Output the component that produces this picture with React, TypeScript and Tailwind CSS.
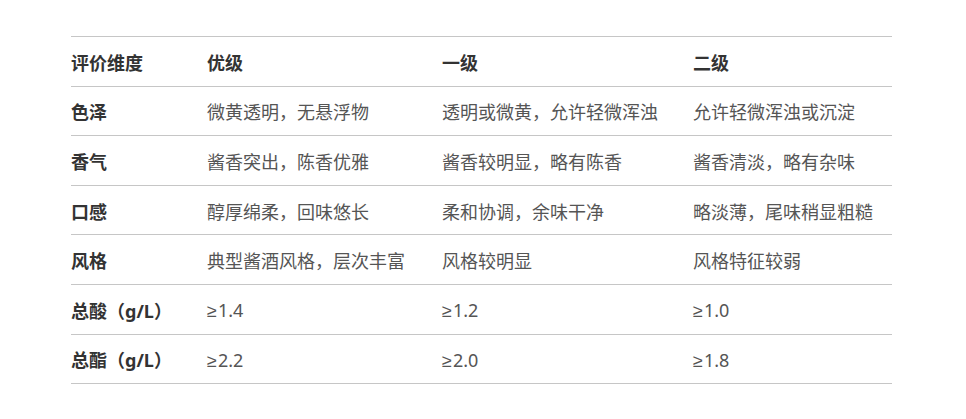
import React from "react";

const header = ["评价维度", "优级", "一级", "二级"];
const rows: string[][] = [
  ["色泽", "微黄透明，无悬浮物", "透明或微黄，允许轻微浑浊", "允许轻微浑浊或沉淀"],
  ["香气", "酱香突出，陈香优雅", "酱香较明显，略有陈香", "酱香清淡，略有杂味"],
  ["口感", "醇厚绵柔，回味悠长", "柔和协调，余味干净", "略淡薄，尾味稍显粗糙"],
  ["风格", "典型酱酒风格，层次丰富", "风格较明显", "风格特征较弱"],
  ["总酸（g/L）", "≥1.4", "≥1.2", "≥1.0"],
  ["总酯（g/L）", "≥2.2", "≥2.0", "≥1.8"],
];

function Cell({ text }: { text: string }) {
  if (text.startsWith("≥")) {
    return (
      <>
        <span style={{ fontFamily: '"Liberation Sans", sans-serif' }} className="mr-[1px]">
          ≥
        </span>
        {text.slice(1)}
      </>
    );
  }
  return <>{text}</>;
}

export default function App() {
  return (
    <div
      className="w-[966px] h-[419px] bg-white pt-[36px] pl-[71px]"
      style={{ fontFamily: '"Noto Sans", "Noto Sans CJK SC", sans-serif' }}
    >
      <div className="w-[821px] border-t border-[#c6c6c6]">
        <div className="grid grid-cols-[136px_235px_251px_199px] h-[49.6px] border-b border-[#c6c6c6] items-center">
          {header.map((h, i) => (
            <div key={i} className="text-[18px] font-bold text-[#333333] pt-[3px] leading-none">
              {h}
            </div>
          ))}
        </div>
        {rows.map((r, ri) => (
          <div
            key={ri}
            className="grid grid-cols-[136px_235px_251px_199px] h-[49.6px] border-b border-[#c6c6c6] items-center"
          >
            {r.map((c, ci) => (
              <div
                key={ci}
                className={
                  ci === 0
                    ? "text-[18px] font-bold text-[#333333] pt-[3px] leading-none whitespace-nowrap"
                    : "text-[18px] text-[#555555] pt-[3px] leading-none whitespace-nowrap"
                }
              >
                <Cell text={c} />
              </div>
            ))}
          </div>
        ))}
      </div>
    </div>
  );
}
